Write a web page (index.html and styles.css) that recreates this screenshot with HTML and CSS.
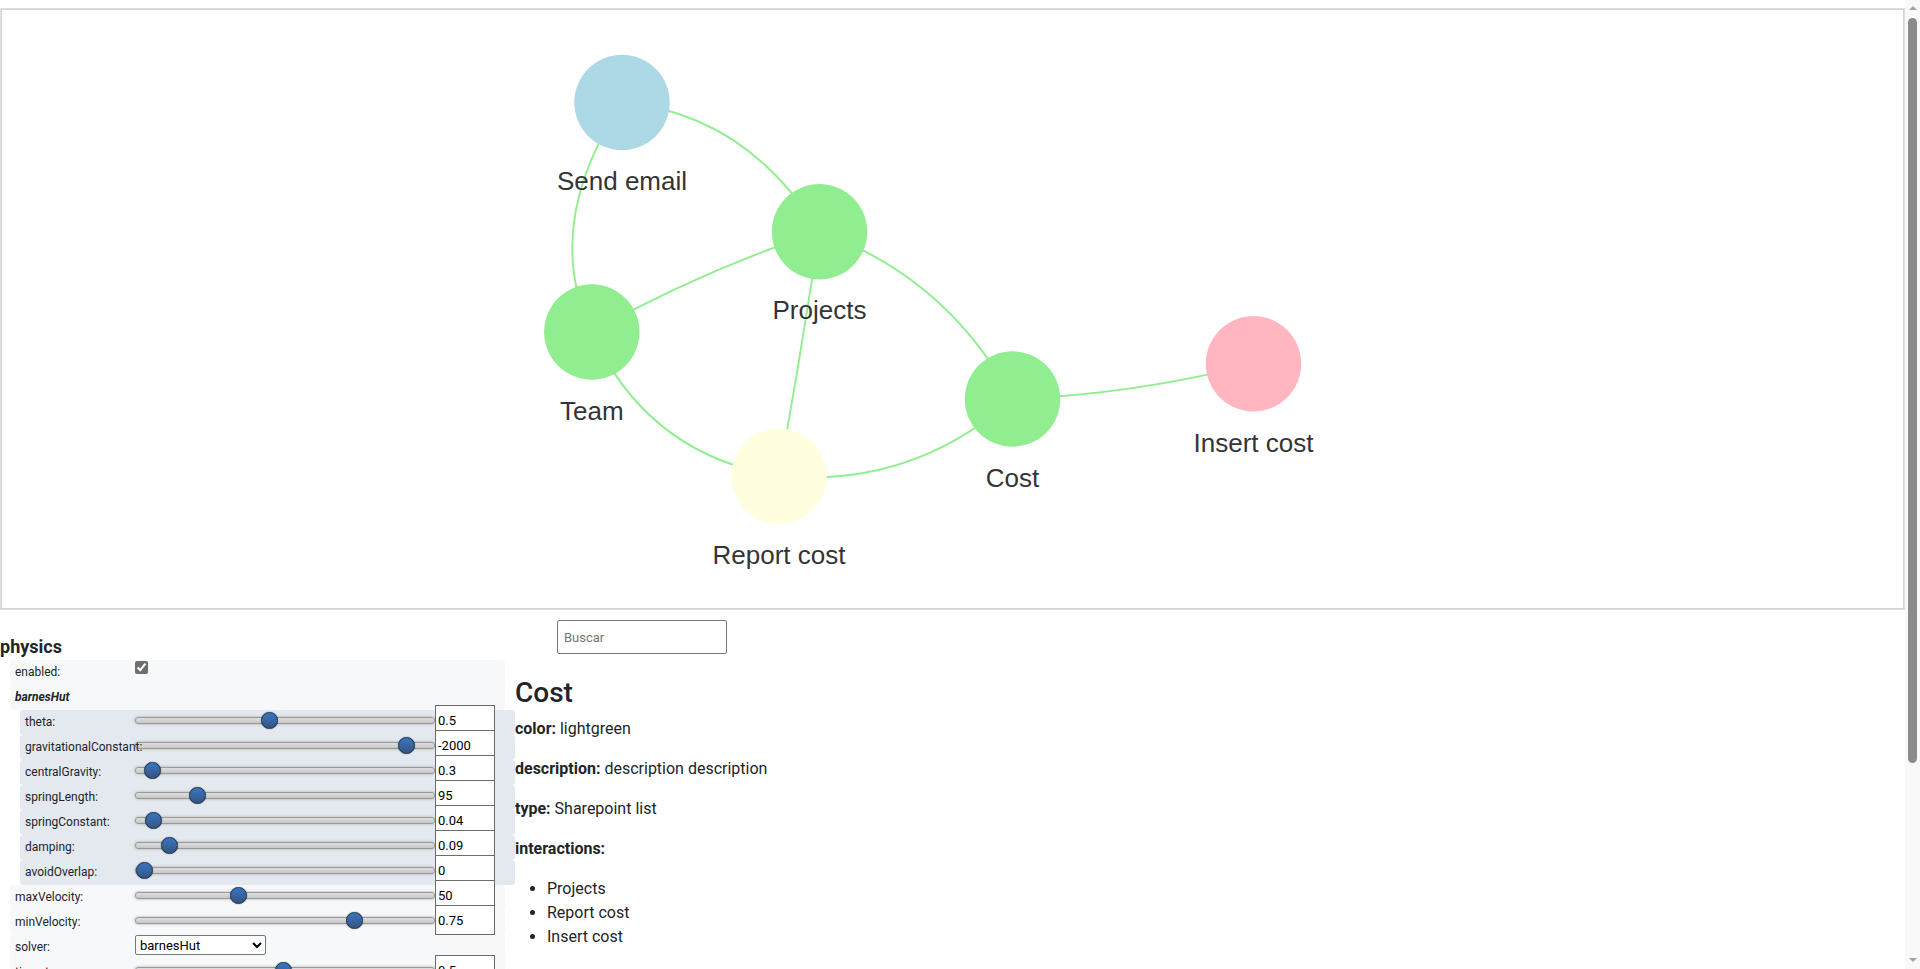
FILE: index.html
```html
<!DOCTYPE html>
<html lang="es">
<head>
<meta charset="utf-8">
<title>Network</title>
<link rel="stylesheet" href="styles.css">
</head>
<body>
<div class="page">
<div class="content">
<div class="card">
  <div class="net">
    <svg class="graph" viewBox="2 10 1901 598" width="1901" height="598" xmlns="http://www.w3.org/2000/svg">
      <g class="edges" fill="none" stroke="#90ee90" stroke-width="1.9">
        <path d="M622 102.5 Q745.3 113 819.5 231.7"/>
        <path d="M622 102.5 Q541.1 226.7 591.8 332"/>
        <path d="M591.8 332 Q702.4 270.2 819.5 231.7"/>
        <path d="M819.5 231.7 Q801 354 779 476.2"/>
        <path d="M819.5 231.7 Q947.5 277.6 1012.5 399"/>
        <path d="M779 476.2 Q912 488 1012.5 399"/>
        <path d="M591.8 332 Q646.7 454.3 779 476.2"/>
        <path d="M1012.5 399 Q1134.5 394.3 1253.5 363.8"/>
      </g>
      <g class="nodes">
        <circle cx="622" cy="102.5" r="47.7" fill="#add8e6"/>
        <circle cx="819.5" cy="231.7" r="47.7" fill="#90ee90"/>
        <circle cx="591.8" cy="332" r="47.7" fill="#90ee90"/>
        <circle cx="779" cy="476.2" r="47.7" fill="#ffffe0"/>
        <circle cx="1012.5" cy="399" r="47.7" fill="#90ee90"/>
        <circle cx="1253.5" cy="363.8" r="47.7" fill="#ffb6c1"/>
      </g>
      <g class="labels" text-anchor="middle">
        <text x="622" y="190">Send email</text>
        <text x="819.5" y="318.5">Projects</text>
        <text x="591.8" y="419.5">Team</text>
        <text x="779" y="563.5">Report cost</text>
        <text x="1012.5" y="486.5">Cost</text>
        <text x="1253.5" y="451.5">Insert cost</text>
      </g>
    </svg>
  </div>
</div>

<div class="lower">
  <div class="config">
    <div class="cfg-header">physics</div>

    <div class="cfg-item s2"><div class="cfg-label">enabled:</div><input type="checkbox" class="cfg-checkbox" checked></div>
    <div class="cfg-item s2"><div class="cfg-label"><i><b>barnesHut</b></i></div></div>

    <div class="cfg-item s3"><div class="cfg-label">theta:</div><input type="range" class="cfg-range" min="0.1" max="1" step="0.05" value="0.5"><input type="text" class="cfg-num" value="0.5"></div>
    <div class="cfg-item s3"><div class="cfg-label">gravitationalConstant:</div><input type="range" class="cfg-range" min="-30000" max="0" step="50" value="-2000"><input type="text" class="cfg-num" value="-2000"></div>
    <div class="cfg-item s3"><div class="cfg-label">centralGravity:</div><input type="range" class="cfg-range" min="0" max="10" step="0.05" value="0.3"><input type="text" class="cfg-num" value="0.3"></div>
    <div class="cfg-item s3"><div class="cfg-label">springLength:</div><input type="range" class="cfg-range" min="0" max="500" step="5" value="95"><input type="text" class="cfg-num" value="95"></div>
    <div class="cfg-item s3"><div class="cfg-label">springConstant:</div><input type="range" class="cfg-range" min="0" max="1.2" step="0.005" value="0.04"><input type="text" class="cfg-num" value="0.04"></div>
    <div class="cfg-item s3"><div class="cfg-label">damping:</div><input type="range" class="cfg-range" min="0" max="1" step="0.01" value="0.09"><input type="text" class="cfg-num" value="0.09"></div>
    <div class="cfg-item s3"><div class="cfg-label">avoidOverlap:</div><input type="range" class="cfg-range" min="0" max="1" step="0.01" value="0"><input type="text" class="cfg-num" value="0"></div>

    <div class="cfg-item s2"><div class="cfg-label">maxVelocity:</div><input type="range" class="cfg-range" min="0" max="150" step="1" value="50"><input type="text" class="cfg-num" value="50"></div>
    <div class="cfg-item s2"><div class="cfg-label">minVelocity:</div><input type="range" class="cfg-range" min="0.01" max="1" step="0.01" value="0.75"><input type="text" class="cfg-num" value="0.75"></div>
    <div class="cfg-item s2"><div class="cfg-label">solver:</div>
      <select class="cfg-select">
        <option selected>barnesHut</option>
        <option>forceAtlas2Based</option>
        <option>repulsion</option>
        <option>hierarchicalRepulsion</option>
      </select>
    </div>
    <div class="cfg-item s2"><div class="cfg-label">timestep:</div><input type="range" class="cfg-range" min="0.01" max="1" step="0.01" value="0.5"><input type="text" class="cfg-num" value="0.5"></div>
    <div class="cfg-item s2"><div class="cfg-label"><i><b>wind</b></i></div></div>
    <div class="cfg-item s3"><div class="cfg-label">x:</div><input type="range" class="cfg-range" min="-10" max="10" step="0.1" value="0"><input type="text" class="cfg-num" value="0"></div>
    <div class="cfg-item s3"><div class="cfg-label">y:</div><input type="range" class="cfg-range" min="-10" max="10" step="0.1" value="0"><input type="text" class="cfg-num" value="0"></div>

    <div class="cfg-button">generate options</div>
  </div>

  <div class="info-col">
    <input type="text" class="search" placeholder="Buscar">
    <div class="info">
      <h3>Cost</h3>
      <p><b>color:</b> lightgreen</p>
      <p><b>description:</b> description description</p>
      <p><b>type:</b> Sharepoint list</p>
      <p><b>interactions:</b></p>
      <ul>
        <li>Projects</li>
        <li>Report cost</li>
        <li>Insert cost</li>
      </ul>
    </div>
  </div>
</div>
</div>

<div class="scrollbar" aria-hidden="true">
  <div class="sb-arrow up"></div>
  <div class="sb-thumb"></div>
  <div class="sb-space"></div>
  <div class="sb-arrow down"></div>
</div>
</div>
</body>
</html>
```

FILE: styles.css
```css
*, *::before, *::after { box-sizing: border-box; }

html, body { height: 100%; }

body {
  margin: 0;
  overflow: hidden;
  font-family: Roboto, "Noto Sans", "Liberation Sans", sans-serif;
  font-size: 16px;
  line-height: 1.5;
  color: #212529;
  background: #fff;
}

/* page: scrolling content + a Windows-like scrollbar column */
.page {
  display: flex;
  height: 100vh;
}
.content {
  flex: 1;
  min-width: 0;
  overflow: hidden;
}

.scrollbar {
  flex: none;
  width: 15px;
  height: 100%;
  background: #f9f9f9;
  display: flex;
  flex-direction: column;
  align-items: center;
}
.sb-arrow {
  flex: none;
  width: 0;
  height: 0;
  border-left: 4px solid transparent;
  border-right: 4px solid transparent;
}
.sb-arrow.up {
  margin-top: 6px;
  border-bottom: 4px solid #a3a3a3;
}
.sb-arrow.down {
  margin-bottom: 7px;
  border-top: 4px solid #a3a3a3;
}
.sb-thumb {
  flex: none;
  width: 9px;
  height: 745px;
  margin-top: 8px;
  background: #8b8b8b;
  border-radius: 5px;
}
.sb-space { flex: 1; }

/* graph card */
.card {
  margin-top: 8px;
  border: 1px solid rgba(0, 0, 0, 0.125);
  width: 100%;
}
.net {
  height: 600px;
  border: 1px solid lightgray;
  background: #fff;
}
.graph { display: block; width: 100%; height: 100%; }
.labels text {
  font-family: "Liberation Sans", Arial, sans-serif;
  font-size: 26px;
  fill: #343434;
}

/* lower area */
.lower { display: flex; align-items: flex-start; }

.config { width: 515px; flex: none; padding-top: 23px; font-size: 12px; }

.cfg-header {
  font-size: 18px;
  font-weight: 700;
  line-height: 27px;
}

.cfg-item {
  display: flex;
  align-items: flex-start;
  width: 495px;
  height: 25px;
  line-height: 25px;
  padding-left: 5px;
  border-radius: 3px;
  position: relative;
}
.cfg-item.s2 { margin-left: 10px; background: #f7f8fa; }
.cfg-item.s3 { margin-left: 20px; background: #e4e9f0; }

.cfg-label {
  flex: none;
  width: 120px;
  white-space: nowrap;
  position: relative;
  z-index: 1;
}
.cfg-item.s3 .cfg-label { width: 110px; }

.cfg-checkbox {
  margin: 1px 0 0 0;
  width: 13px;
  height: 13px;
  accent-color: #6e6e6e;
}

.cfg-range {
  -webkit-appearance: none;
  appearance: none;
  flex: none;
  width: 300px;
  height: 20px;
  margin: 0;
  padding: 0;
  border: 0;
  background: transparent;
}
.cfg-range::-webkit-slider-runnable-track {
  width: 300px;
  height: 7px;
  background: linear-gradient(to bottom, #dedede 0%, #c8c8c8 99%);
  border: 1px solid #999;
  box-shadow: #aaa 0 0 3px 0;
  border-radius: 3px;
}
.cfg-range::-webkit-slider-thumb {
  -webkit-appearance: none;
  border: 1px solid #14334b;
  height: 17px;
  width: 17px;
  border-radius: 50%;
  background: linear-gradient(to bottom, #3876c2 0%, #385380 100%);
  box-shadow: #111927 0 0 1px 0;
  margin-top: -6px;
}

.cfg-num {
  flex: none;
  width: 60px;
  height: 30px;
  margin: -5px 0 0 0;
  padding: 1px 2px;
  border: 1px solid #6b6b6b;
  border-radius: 0;
  background: #fff;
  font-family: Roboto, "Noto Sans", sans-serif;
  font-size: 13px;
  color: #000;
  outline: none;
}

.cfg-select {
  flex: none;
  width: 131px;
  height: 20px;
  margin: 0;
  font-family: Roboto, "Noto Sans", sans-serif;
  font-size: 13px;
  color: #000;
  border: 1px solid #767676;
  border-radius: 2px;
  background: #fff;
}

.cfg-button {
  width: 495px;
  height: 29px;
  line-height: 25px;
  margin: 20px 0 5px 0;
  padding-left: 5px;
  background: #f7f8fa;
  border: 2px solid #ceced0;
  border-radius: 3px;
}

/* info column */
.info-col { flex: 1; }

.search {
  display: block;
  margin: 10px 0 0 42px;
  width: 170px;
  height: 34px;
  padding: 0 6px;
  border: 1px solid #767676;
  border-radius: 2px;
  font-family: Roboto, "Noto Sans", sans-serif;
  font-size: 13px;
  color: #212529;
}
.search::placeholder { color: #757575; }

.info { margin-top: 22px; }
.info h3 {
  margin: 0 0 7px 0;
  font-size: 28px;
  font-weight: 500;
  line-height: 1.2;
}
.info p { margin: 0 0 16px 0; }
.info b { font-weight: 700; }
.info ul { margin: 0 0 16px 0; padding-left: 32px; }
```
